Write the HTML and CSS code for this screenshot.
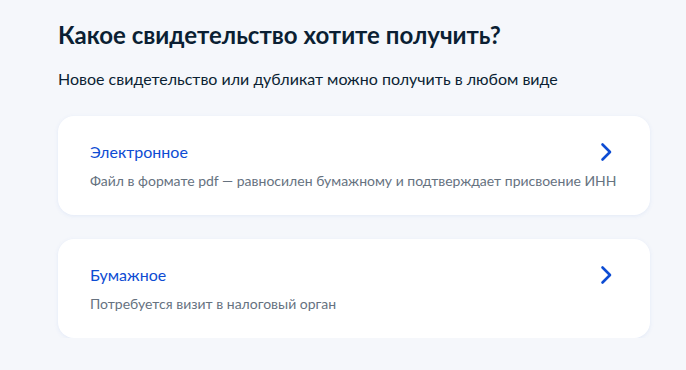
FILE: index.html
```html
<!DOCTYPE html>
<html lang="ru">
<head>
  <meta charset="UTF-8" />
  <meta name="viewport" content="width=device-width, initial-scale=1.0"/>
  <title>Какое свидетельство хотите получить?</title>
  <link rel="stylesheet" href="styles.css">
</head>
<body>

  <div class="page">
    <h1>Какое свидетельство хотите получить?</h1>
    <p class="lead">Новое свидетельство или дубликат можно получить в любом виде</p>

    <div class="options">
      <a class="option" href="#">
        <div class="option-head">
          <span class="option-title">Электронное</span>
          <svg class="chevron" width="24" height="24" viewBox="0 0 24 24">
            <path d="M8.5 4.5 L16 12 L8.5 19.5" fill="none" stroke="#0d4cd3" stroke-width="2.6" stroke-linecap="round" stroke-linejoin="round"/>
          </svg>
        </div>
        <div class="option-desc">Файл в формате pdf — равносилен бумажному и подтверждает присвоение ИНН</div>
      </a>

      <a class="option" href="#">
        <div class="option-head">
          <span class="option-title">Бумажное</span>
          <svg class="chevron" width="24" height="24" viewBox="0 0 24 24">
            <path d="M8.5 4.5 L16 12 L8.5 19.5" fill="none" stroke="#0d4cd3" stroke-width="2.6" stroke-linecap="round" stroke-linejoin="round"/>
          </svg>
        </div>
        <div class="option-desc">Потребуется визит в налоговый орган</div>
      </a>
    </div>
  </div>

</body>
</html>
```

FILE: styles.css
```css
body {
  font-family: Lato, "Noto Sans", sans-serif;
  margin: 0;
  background-color: #f5f7fb;
  color: #0b1f33;
}
.page {
  width: 592px;
  padding: 19px 0 0 58px;
}
h1 {
  margin: 0;
  font-size: 24px;
  line-height: 32px;
  font-weight: 700;
}
.lead {
  margin: 16px 0 0;
  font-size: 16px;
  line-height: 24px;
}
.options {
  display: flex;
  flex-direction: column;
  gap: 24px;
  margin-top: 25px;
}
.option {
  display: block;
  background: #fff;
  border-radius: 16px;
  padding: 24px 24px 24px 32px;
  text-decoration: none;
  box-shadow: 0 1px 4px rgba(102, 140, 220, 0.12);
}
.option-head {
  display: flex;
  align-items: center;
  justify-content: space-between;
}
.option-title {
  color: #0d4cd3;
  font-size: 16px;
  line-height: 24px;
}
.option-desc {
  margin-top: 7px;
  color: #66727f;
  font-size: 14px;
  line-height: 20px;
  white-space: nowrap;
}
.chevron {
  flex-shrink: 0;
  margin-right: 8px;
}
```
